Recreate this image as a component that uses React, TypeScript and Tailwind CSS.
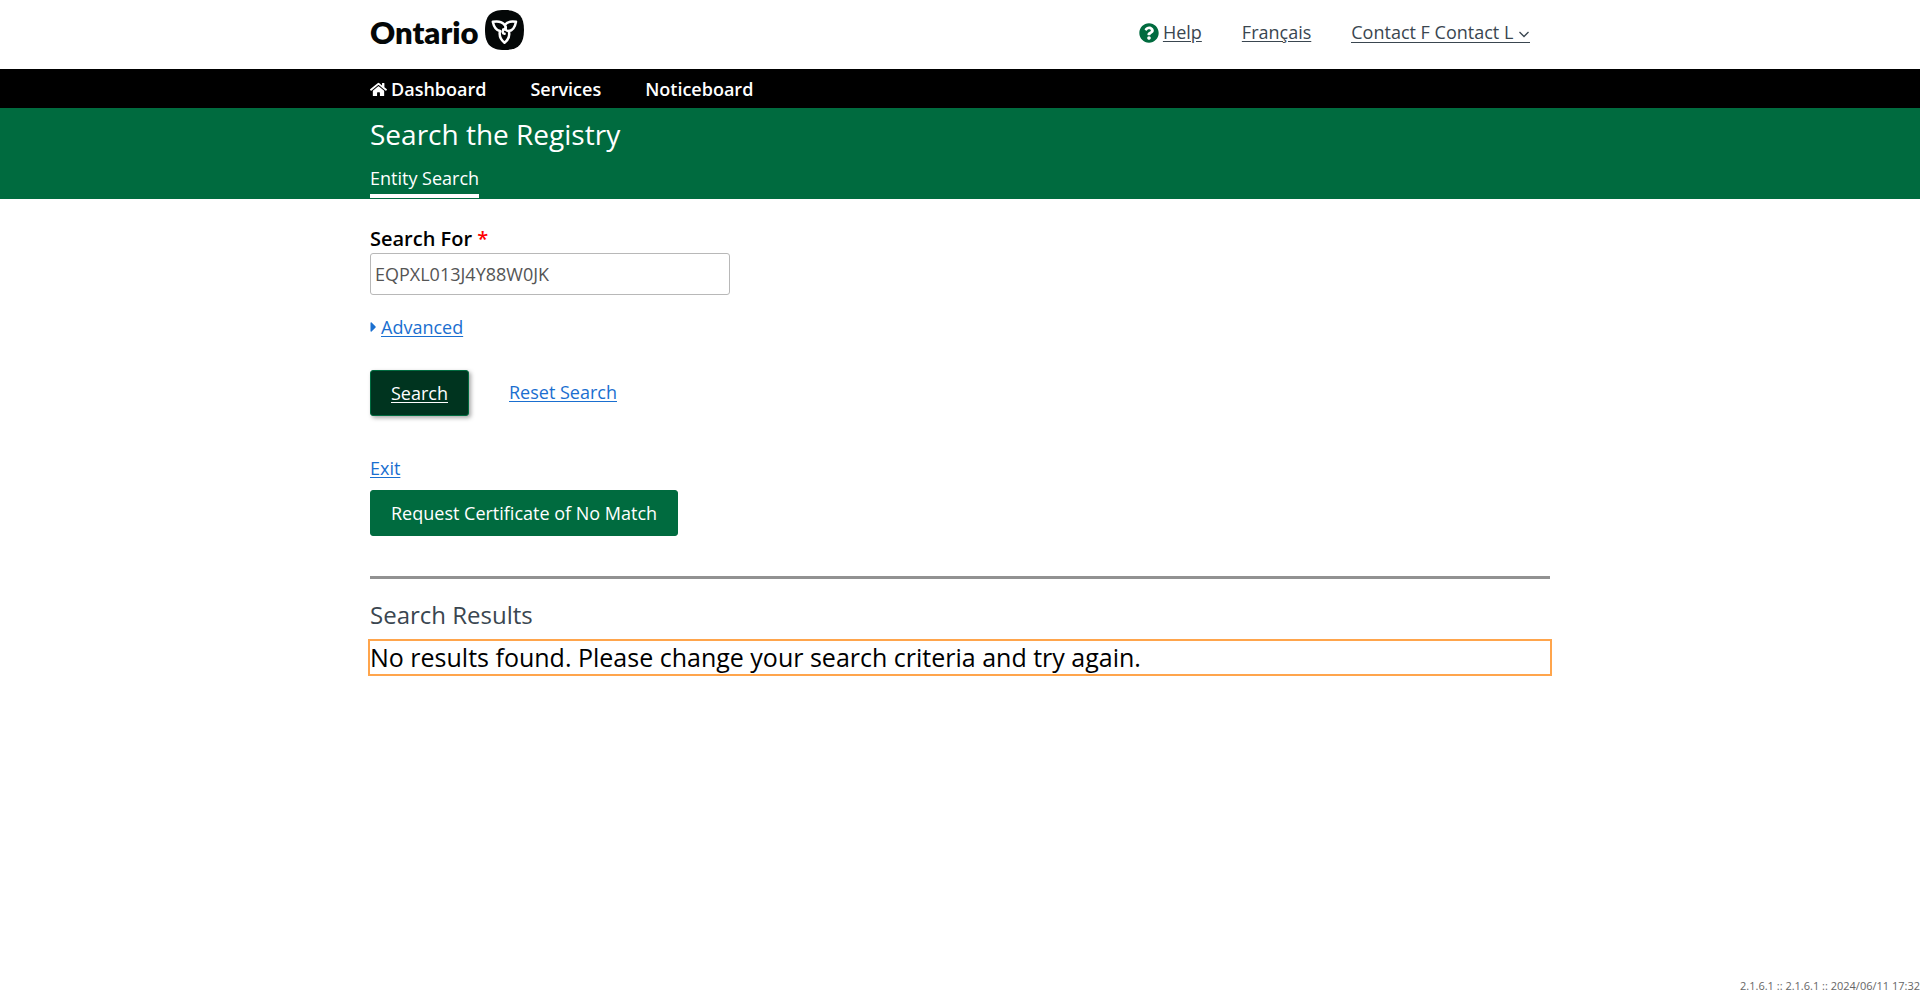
import { useState } from "react";
import { FaHome, FaQuestionCircle, FaCaretRight } from "react-icons/fa";

function TrilliumMark() {
  return (
    <svg viewBox="0 0 39 40" className="h-10 w-[39px]" aria-hidden="true">
      <path
        d="M19.500 0C33 0 39 5.500 39 20S33 40 19.500 40 0 34.500 0 20 6 0 19.500 0Z"
        fill="#040707"
      />
      <g fill="none" stroke="#fff" strokeWidth="2.5" strokeLinejoin="round" strokeLinecap="round">
        <path d="M15 21C11.500 20.500 9 17.500 7.800 11.800C12 11 17 11.500 19.800 15C21.500 17.500 20.500 19.500 18.200 19.500" />
        <path d="M19.800 15C22.500 11.500 27 11 31 11.800C30 17 27.500 20.800 23.800 21C21 21 20.200 19.500 20.800 17.500" />
        <path d="M15 21C14 25.500 16 30 19.500 32.700C23 30 25 25.500 23.800 21M18.700 19.700C17.200 21 17.200 23.500 19.600 23.800" />
      </g>
    </svg>
  );
}

function Chevron() {
  return (
    <svg viewBox="0 0 12 12" className="inline-block size-3" aria-hidden="true">
      <path d="M1.500 4l4.500 4.500L10.500 4" fill="none" stroke="currentColor" strokeWidth="1.3" />
    </svg>
  );
}

const container = "mx-auto w-full max-w-[1180px]";
const link = "text-[#1a6fd0] underline underline-offset-2";

export default function App() {
  const [query, setQuery] = useState("EQPXL013J4Y88W0JK");

  return (
    <div className="flex min-h-screen flex-col bg-white font-['Open_Sans',sans-serif] text-lg text-black">
      <header className="pt-[10px] pb-[19px]">
        <div className={`${container} flex items-start justify-between`}>
          <a href="#" className="flex h-10 items-start gap-[6px] text-[#040707]">
            <span className="pt-[2px] font-['Lato',sans-serif] text-[31px] leading-10 font-extrabold">Ontario</span>
            <TrilliumMark />
          </a>
          <nav className="flex gap-10 pt-2 pr-5 leading-7 text-[#3a4650]">
            <a href="#" className="flex items-center gap-1">
              <FaQuestionCircle className="mt-px size-5 text-[#006b3f]" aria-hidden="true" />
              <span className="underline underline-offset-2">Help</span>
            </a>
            <a href="#" className="underline underline-offset-2">Français</a>
            <a href="#">
              <span className="inline-block border-b border-current leading-[19px]">
                Contact F Contact L <Chevron />
              </span>
            </a>
          </nav>
        </div>
      </header>

      <nav className="bg-black font-semibold text-white">
        <div className={`${container} flex gap-11 pt-[7px] pb-[5px] leading-[27px]`}>
          <a href="#" className="flex items-center gap-1">
            <FaHome className="size-[17px]" aria-hidden="true" />
            Dashboard
          </a>
          <a href="#">Services</a>
          <a href="#">Noticeboard</a>
        </div>
      </nav>

      <section className="bg-[#006b3f] text-white">
        <div className={`${container} pt-[6px] pb-px`}>
          <h1 className="text-[28px] leading-10">Search the Registry</h1>
          <div className="flex pt-[11px]">
            <a href="#" className="border-b-4 border-white pb-[2px] leading-[27px]">Entity Search</a>
          </div>
        </div>
      </section>

      <main className={`${container} flex-1 pt-[26px]`}>
        <form onSubmit={(e) => e.preventDefault()}>
          <label htmlFor="query" className="block text-xl leading-7 font-semibold">
            Search For <span className="text-[#ff0000]">*</span>
          </label>
          <input
            id="query"
            value={query}
            onChange={(e) => setQuery(e.target.value)}
            className="block h-[42px] w-[360px] rounded-[3px] border border-[#b8b8b8] px-1 text-[#555]"
          />
          <a href="#" className="mt-[18px] flex items-center gap-1 leading-7 text-[#1a6fd0]">
            <FaCaretRight className="h-4 w-[7px]" aria-hidden="true" />
            <span className="underline underline-offset-2">Advanced</span>
          </a>
          <div className="mt-[29px] flex items-center gap-10">
            <button
              type="submit"
              className="h-[46px] rounded-[3px] border border-[#006b3f] bg-[#00341f] px-5 text-white underline underline-offset-2 shadow-[2px_2px_4px_rgba(0,0,0,0.35)]"
            >
              Search
            </button>
            <button type="reset" className={`${link} pb-[2px]`}>Reset Search</button>
          </div>
        </form>

        <div className="mt-[38px] flex flex-col items-start gap-2">
          <a href="#" className={`${link} leading-7`}>Exit</a>
          <button type="button" className="h-[46px] rounded-[3px] border border-[#006b3f] bg-[#006b3f] px-5 text-white">
            Request Certificate of No Match
          </button>
        </div>

        <hr className="mt-10 border-t-3 border-[#929292]" />
        <h2 className="mt-[18px] text-2xl leading-9 text-[#3a4650]">Search Results</h2>
        <p tabIndex={-1} className="mt-2 text-[25px] leading-[33px] outline-2 outline-[#ffa54c]">
          No results found. Please change your search criteria and try again.
        </p>
      </main>

      <footer className="text-right text-[11px] leading-[15px] text-[#666]">
        2.1.6.1 :: 2.1.6.1 :: 2024/06/11 17:32
      </footer>
    </div>
  );
}
